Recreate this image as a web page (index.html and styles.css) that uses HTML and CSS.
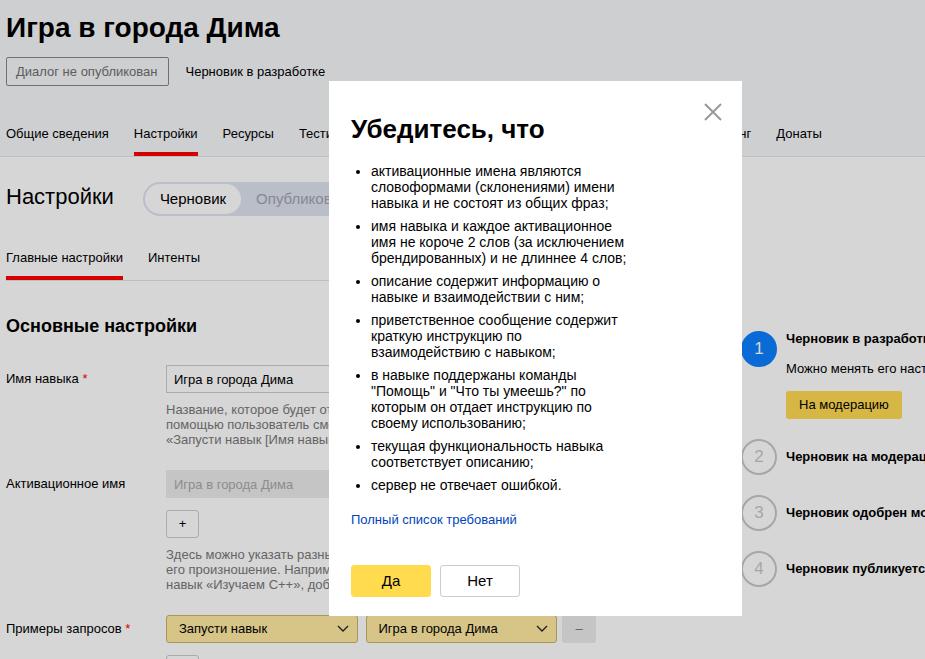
FILE: index.html
```html
<!DOCTYPE html>
<html lang="ru">
<head>
<meta charset="utf-8">
<title>Игра в города Дима</title>
<link rel="stylesheet" href="styles.css">
</head>
<body>
<header class="header">
  <h1 class="title">Игра в города Дима</h1>
  <div class="status">
    <span class="badge">Диалог не опубликован</span>
    <span>Черновик в разработке</span>
  </div>
  <nav class="tabs">
    <a class="tab" href="#">Общие сведения</a>
    <a class="tab tab-active" href="#">Настройки</a>
    <a class="tab" href="#">Ресурсы</a>
    <a class="tab" href="#">Тестирование</a>
    <a class="tab tab-far" href="#">Мониторинг</a>
    <a class="tab" href="#">Донаты</a>
  </nav>
</header>
<div class="layout">
  <main class="main">
    <div class="heading">
      <h2 class="section">Настройки</h2>
      <div class="toggle">
        <button class="toggle-item toggle-on" type="button">Черновик</button>
        <button class="toggle-item" type="button">Опубликовано</button>
      </div>
    </div>
    <nav class="tabs subtabs">
      <a class="tab tab-active" href="#">Главные настройки</a>
      <a class="tab" href="#">Интенты</a>
    </nav>
    <h3 class="group">Основные настройки</h3>
    <form class="form">
      <div class="row">
        <label class="label" for="name">Имя навыка <span class="req">*</span></label>
        <div class="field">
          <input class="input" id="name" type="text" value="Игра в города Дима">
          <p class="hint">Название, которое будет отображаться<br>помощью пользователь сможет<br>«Запусти навык [Имя навыка]»</p>
        </div>
      </div>
      <div class="row">
        <label class="label" for="activation">Активационное имя</label>
        <div class="field">
          <input class="input" id="activation" type="text" value="Игра в города Дима" disabled>
          <button class="add" type="button">+</button>
          <p class="hint">Здесь можно указать разные имена<br>его произношение. Например,<br>навык «Изучаем C++», добавьте</p>
        </div>
      </div>
      <div class="row">
        <label class="label" for="phrase">Примеры запросов <span class="req">*</span></label>
        <div class="field">
          <div class="examples">
            <div class="select">
              <select id="phrase"><option>Запусти навык</option></select>
              <svg viewBox="0 0 12 8" width="12" height="8"><path d="M1 1l5 5 5-5"/></svg>
            </div>
            <div class="select">
              <select aria-label="Имя"><option>Игра в города Дима</option></select>
              <svg viewBox="0 0 12 8" width="12" height="8"><path d="M1 1l5 5 5-5"/></svg>
            </div>
            <button class="remove" type="button" disabled>–</button>
          </div>
          <button class="add" type="button">+</button>
        </div>
      </div>
    </form>
  </main>
  <aside class="steps">
    <div class="step step-current">
      <span class="num">1</span>
      <div class="step-body">
        <b>Черновик в разработке</b>
        <p class="note">Можно менять его настройки</p>
        <button class="moderate" type="button">На модерацию</button>
      </div>
    </div>
    <div class="step"><span class="num">2</span><b>Черновик на модерации</b></div>
    <div class="step"><span class="num">3</span><b>Черновик одобрен модератором</b></div>
    <div class="step"><span class="num">4</span><b>Черновик публикуется</b></div>
  </aside>
</div>
<div class="backdrop"></div>
<section class="modal" role="dialog" aria-labelledby="modal-title">
  <button class="close" type="button" aria-label="Закрыть"><svg viewBox="0 0 18 18" width="18" height="18"><path d="M1 1l16 16M17 1L1 17"/></svg></button>
  <h2 class="modal-title" id="modal-title">Убедитесь, что</h2>
  <ul class="list">
    <li>активационные имена являются словоформами (склонениями) имени навыка и не состоят из общих фраз;</li>
    <li>имя навыка и каждое активационное имя не короче 2 слов (за исключением брендированных) и не длиннее 4 слов;</li>
    <li>описание содержит информацию о навыке и взаимодействии с ним;</li>
    <li>приветственное сообщение содержит краткую инструкцию по взаимодействию с навыком;</li>
    <li>в навыке поддержаны команды "Помощь" и "Что ты умеешь?" по которым он отдает инструкцию по своему использованию;</li>
    <li>текущая функциональность навыка соответствует описанию;</li>
    <li>сервер не отвечает ошибкой.</li>
  </ul>
  <a class="link" href="#">Полный список требований</a>
  <div class="actions">
    <button class="btn btn-yes" type="button">Да</button>
    <button class="btn" type="button">Нет</button>
  </div>
</section>
</body>
</html>
```
FILE: styles.css
```css
* { box-sizing: border-box; }
html { height: 100%; overflow: hidden; }
body {
  margin: 0;
  height: 100%;
  overflow: hidden;
  background: #fff;
  color: #000;
  font: 13px/16px "Liberation Sans", Arial, sans-serif;
}
h1, h2, h3, p, ul { margin: 0; }
button, input, select { font: inherit; color: inherit; margin: 0; }
a { color: inherit; text-decoration: none; }

.header { background: #f6f7fa; border-bottom: 1px solid #e3e3e3; padding: 12px 6px 0; }
.title { font-size: 28px; line-height: 32px; }
.status { display: flex; align-items: center; gap: 17px; margin-top: 13px; }
.badge { border: 1px solid #878787; border-radius: 2px; padding: 6px 10px 5px 9px; line-height: 16px; color: #6f6f6f; }
.tabs { display: flex; gap: 25px; white-space: nowrap; }
.header .tabs { margin-top: 40px; }
.header .tab { padding-bottom: 10px; }
.tab { padding-bottom: 11px; border-bottom: 4px solid transparent; }
.tab-active { border-bottom-color: #f00; }
.tab-far { margin-left: 271px; }

.layout { display: grid; grid-template-columns: minmax(0, 1fr) 184px; gap: 45px; padding-left: 6px; }
.heading { display: flex; align-items: center; gap: 29px; padding-top: 25px; }
.section { font-size: 22px; line-height: 28px; font-weight: 400; margin-bottom: 4px; }
.toggle { display: flex; height: 34px; border: 2px solid #dde3f0; border-radius: 17px; background: #dde3f0; }
.toggle-item { border: 0; border-radius: 15px; background: none; padding: 0 15px; font-size: 15px; color: #a0a4ad; }
.toggle-on { background: #fff; color: #000; }
.subtabs { margin-top: 34px; border-bottom: 1px solid #e3e3e3; }
.subtabs .tab { padding-bottom: 10px; }
.group { font-size: 18px; line-height: 22px; margin-top: 34px; }
.form { margin-top: 28px; display: grid; gap: 23px; }
.row { display: grid; grid-template-columns: 160px minmax(0, 430px); }
.label { line-height: 28px; }
.req { color: #f00; }
.input { display: block; width: 100%; height: 28px; border: 1px solid #ccc; border-radius: 0; padding: 0 7px; background: #fff; }
.input:disabled { background: #ebebeb; border-color: #ebebeb; color: #a8a8a8; }
.hint { margin-top: 9px; line-height: 15px; color: #787878; white-space: nowrap; }
.add { display: block; margin-top: 12px; width: 33px; height: 28px; border: 1px solid #ccc; border-radius: 3px; background: none; padding: 0; }
.examples { display: flex; }
.select { flex: 1; display: grid; align-items: center; margin-right: 8px; }
.select + .select { margin-right: 5px; }
.select select, .select svg { grid-area: 1 / 1; }
.select select { appearance: none; width: 100%; height: 28px; border: 1px solid #c9b36a; border-radius: 3px; background: #ffeba0; padding: 0 12px; }
.select svg { justify-self: end; margin-right: 9px; pointer-events: none; }
svg path { fill: none; stroke: #222; stroke-width: 1.3; }
.remove { width: 34px; height: 28px; border: 0; border-radius: 3px; background: #ebebeb; color: #777; padding: 0; }

.steps { padding-top: 174px; overflow: hidden; white-space: nowrap; }
.step { display: flex; align-items: center; gap: 9px; margin-bottom: 20px; }
.step-current { align-items: flex-start; }
.num { flex: none; width: 36px; height: 36px; border: 2px solid #c8c8c8; border-radius: 50%; color: #c8c8c8; font-size: 17px; line-height: 32px; text-align: center; }
.step-current .num { background: #0c80ff; border-color: #0c80ff; color: #fff; }
.note { margin-top: 14px; }
.moderate { margin-top: 14px; height: 28px; border: 0; border-radius: 3px; background: #ffd953; padding: 0 13px; }

.backdrop { position: fixed; inset: 0; background: rgba(0, 0, 0, 0.16); }
.modal { position: absolute; left: 329px; top: 81px; width: 413px; padding: 32px 22px 19px; background: #fff; }
.close { position: absolute; top: 22px; right: 20px; width: 18px; height: 18px; border: 0; padding: 0; background: none; }
.close svg { display: block; }
.close path { stroke: #999; stroke-width: 2; }
.modal-title { font-size: 26px; line-height: 32px; }
.list { margin-top: 18px; padding: 0 90px 0 20px; font-size: 14px; }
.list li { margin-bottom: 7px; }
.link { display: block; margin-top: 19px; color: #04b; }
.actions { display: flex; gap: 9px; margin-top: 37px; }
.btn { width: 80px; height: 32px; border: 1px solid #ccc; border-radius: 3px; background: #fff; padding: 0; font-size: 15px; }
.btn-yes { background: #ffdb4d; border-color: #ffdb4d; }
```
